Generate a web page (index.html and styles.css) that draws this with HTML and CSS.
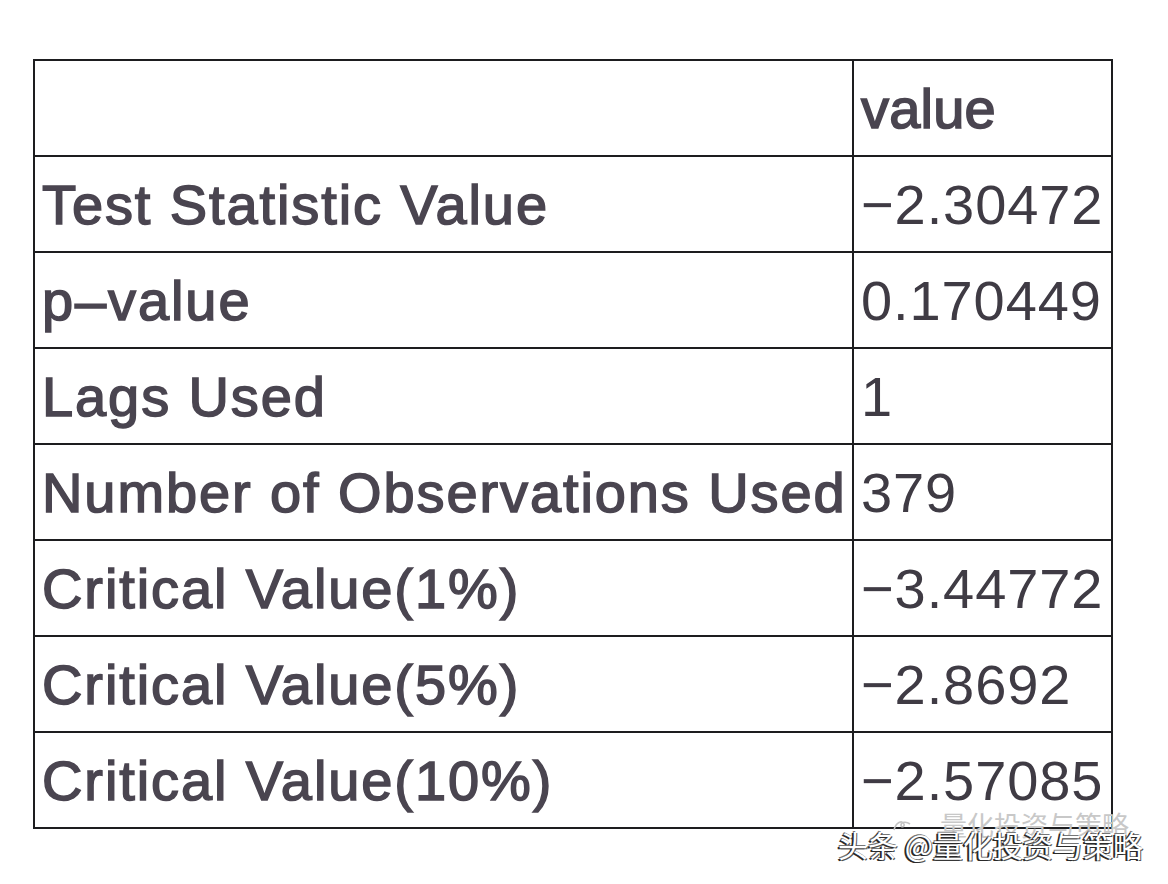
FILE: index.html
```html
<!DOCTYPE html>
<html lang="en">
<head>
<meta charset="utf-8">
<title>ADF Test</title>
<link rel="stylesheet" href="styles.css">
</head>
<body>
<div class="page">
  <table class="stats">
    <tr><td class="label"></td><td class="head">value</td></tr>
    <tr><td class="label">Test Statistic Value</td><td class="val">−2.30472</td></tr>
    <tr><td class="label">p–value</td><td class="val">0.170449</td></tr>
    <tr><td class="label">Lags Used</td><td class="val">1</td></tr>
    <tr><td class="label">Number of Observations Used</td><td class="val">379</td></tr>
    <tr><td class="label">Critical Value(1%)</td><td class="val">−3.44772</td></tr>
    <tr><td class="label">Critical Value(5%)</td><td class="val">−2.8692</td></tr>
    <tr><td class="label">Critical Value(10%)</td><td class="val">−2.57085</td></tr>
  </table>
  <div class="mark">
    <div class="mark-ghost">
      <svg class="swirl" viewBox="0 0 20 14" width="20" height="14"><path d="M2 12 C4 4, 10 2, 12 6 C13 9, 9 10, 9 7 C9 4, 14 3, 18 6" fill="none" stroke="#c4c4c4" stroke-width="1.6"/></svg>
      <span>量化投资与策略</span>
    </div>
    <div class="mark-main">头条 @量化投资与策略</div>
  </div>
</div>
</body>
</html>
```
FILE: styles.css
```css
html, body {
  margin: 0;
  padding: 0;
  background: #ffffff;
}
.page {
  position: relative;
  width: 1168px;
  height: 884px;
  padding: 59px 0 0 33px;
  box-sizing: border-box;
}
.stats {
  border-collapse: collapse;
  width: 1080px;
  table-layout: fixed;
  font-family: "Liberation Sans", Arial, sans-serif;
  font-size: 56px;
  color: #4a4550;
}
.stats tr {
  height: 96px;
}
.stats td {
  border: 2px solid #1d1d1f;
  padding: 2px 0 0 7px;
  white-space: nowrap;
  overflow: hidden;
  line-height: 1;
}
.stats td.label {
  width: 810px;
  font-weight: 400;
  letter-spacing: 1.9px;
  -webkit-text-stroke: 1.5px #4a4550;
}
.stats td.head {
  font-weight: 400;
  letter-spacing: 0.2px;
  -webkit-text-stroke: 1.6px #4a4550;
}
.stats td.val {
  font-weight: 400;
  letter-spacing: 0.9px;
  color: #3f3b44;
}
.mark {
  position: absolute;
  left: 836px;
  top: 806px;
  width: 320px;
  height: 64px;
  font-family: "Noto Sans CJK SC", sans-serif;
}
.mark-ghost {
  position: absolute;
  left: 56px;
  top: 5px;
  display: flex;
  align-items: center;
  gap: 28px;
  font-size: 27px;
  color: #c8c8c8;
  line-height: 1;
}
.mark-main {
  position: absolute;
  left: 2px;
  top: 20px;
  font-size: 30px;
  line-height: 1.2;
  color: #ffffff;
  text-shadow: -2px 1px 0 #2a2a2a, 1px 1px 0 #555, -1px -1px 0 #777;
  white-space: nowrap;
}
```
